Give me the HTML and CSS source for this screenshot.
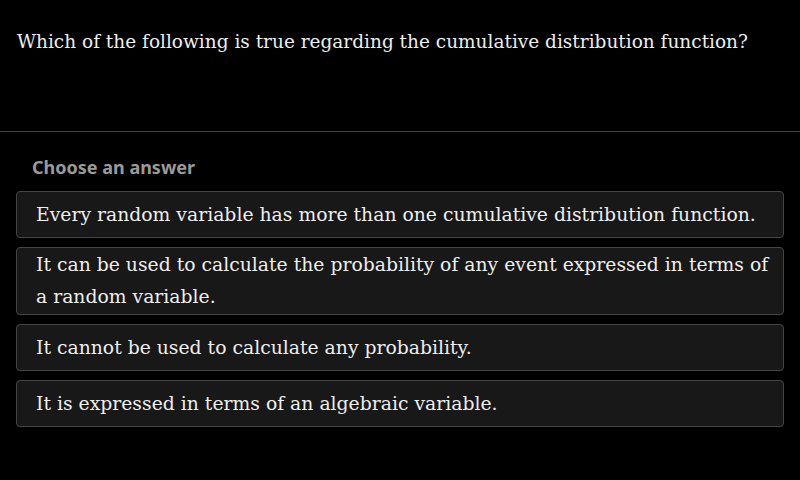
FILE: index.html
```html
<!DOCTYPE html>
<html>
<head>
<meta charset="utf-8">
<link rel="stylesheet" href="styles.css">
</head>
<body>
<div class="page">
  <div class="question">Which of the following is true regarding the cumulative distribution function?</div>
  <div class="divider"></div>
  <div class="answers">
    <div class="label">Choose an answer</div>
    <div class="option"><span class="t">Every random variable has more than one cumulative distribution function.</span></div>
    <div class="option"><span class="t">It can be used to calculate the probability of any event expressed in terms of a random variable.</span></div>
    <div class="option"><span class="t">It cannot be used to calculate any probability.</span></div>
    <div class="option"><span class="t">It is expressed in terms of an algebraic variable.</span></div>
  </div>
</div>
</body>
</html>
```

FILE: styles.css
```css
html, body {
  margin: 0;
  padding: 0;
  background: #000;
  width: 800px;
  height: 480px;
  overflow: hidden;
}
.page {
  display: flex;
  flex-direction: column;
}
.question {
  font-family: "DejaVu Serif", serif;
  font-size: 18.5px;
  line-height: 30px;
  color: #eeeeee;
  padding: 27px 16px 0 17px;
  height: 104px;
  box-sizing: border-box;
}
.divider {
  height: 1px;
  background: #444;
  margin-top: 27px;
}
.answers {
  display: flex;
  flex-direction: column;
  gap: 9px;
  padding: 24px 16px 0 16px;
}
.label {
  font-family: "Noto Sans", sans-serif;
  font-weight: 700;
  font-size: 18px;
  line-height: 22px;
  color: #9a9a9a;
  padding-left: 16px;
  margin-bottom: 4px;
}
.option {
  font-family: "DejaVu Serif", serif;
  font-size: 18.8px;
  line-height: 32px;
  color: #eeeeee;
  background: #181818;
  border: 1px solid #444;
  border-radius: 4px;
  min-height: 47px;
  box-sizing: border-box;
  padding: 1px 6px 1px 19px;
  display: flex;
  align-items: center;
}
```
